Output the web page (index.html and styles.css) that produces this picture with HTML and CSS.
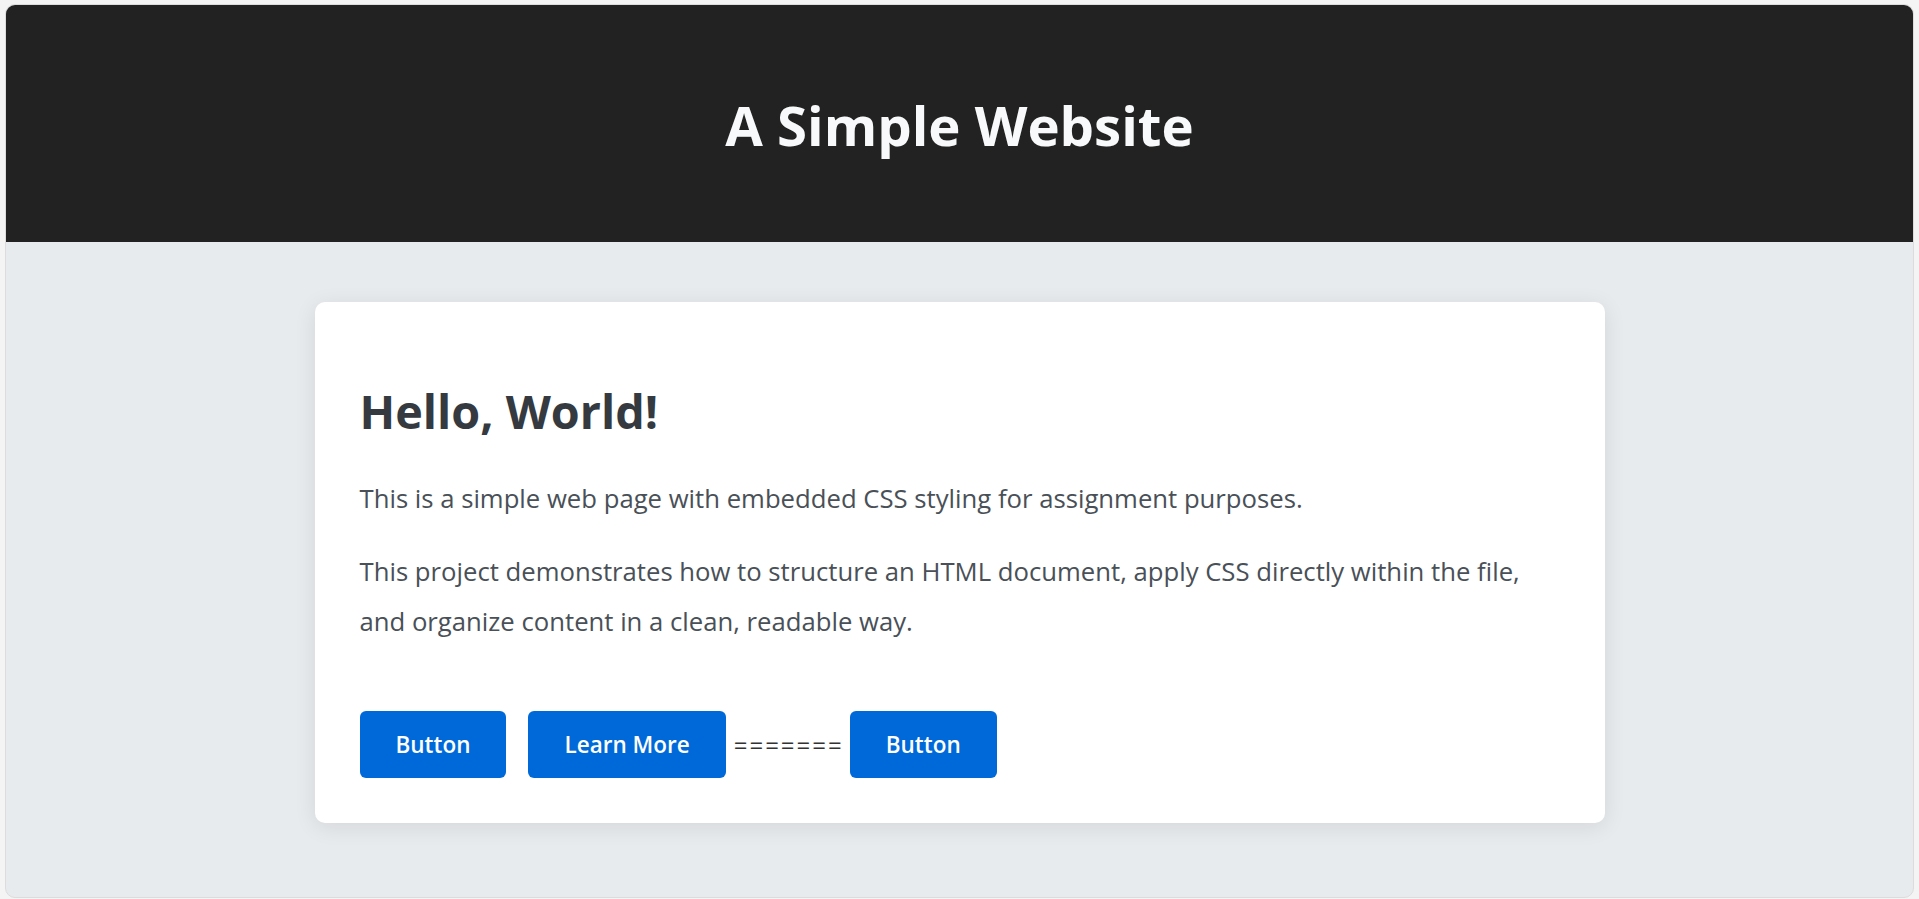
FILE: index.html
```html
<!DOCTYPE html>
<html lang="en">
<head>
<meta charset="utf-8">
<title>A Simple Website</title>
<link rel="stylesheet" href="styles.css">
</head>
<body>
<div class="frame">
  <header class="site-header">
    <h1 class="site-title">A Simple Website</h1>
  </header>
  <main class="site-main">
    <section class="card">
      <h2 class="card-title">Hello, World!</h2>
      <p class="card-text">This is a simple web page with embedded CSS styling for assignment purposes.</p>
      <p class="card-text">This project demonstrates how to structure an HTML document, apply CSS directly within the file, and organize content in a clean, readable way.</p>
      <div class="actions">
        <a class="btn btn-first" href="#">Button</a>
        <a class="btn" href="#">Learn More</a>
        <span class="sep">=======</span>
        <button class="btn" type="button">Button</button>
      </div>
    </section>
  </main>
</div>
</body>
</html>
```
FILE: styles.css
```css
* { box-sizing: border-box; }
html, body { margin: 0; height: 100%; }
body {
  background: #f4f4f4;
  padding: 4px 5px 1px 5px;
  font-family: "Open Sans", "Noto Sans", sans-serif;
}
.frame {
  height: 100%;
  display: flex;
  flex-direction: column;
  border: 1px solid #dcdcdc;
  border-radius: 10px;
  overflow: hidden;
  background: #e8ebee;
}
.site-header {
  background: #222222;
  height: 237px;
  display: flex;
  align-items: center;
  justify-content: center;
  flex: none;
}
.site-title {
  margin: 0;
  color: #f8f9fa;
  font-size: 54.5px;
  font-weight: 700;
  line-height: 1;
  padding-top: 4px;
}
.site-main {
  flex: 1;
  display: flex;
  justify-content: center;
  align-items: flex-start;
  padding-top: 60px;
}
.card {
  width: 1290px;
  background: #ffffff;
  border-radius: 10px;
  box-shadow: 0 4px 22px rgba(0, 0, 0, 0.09);
  padding: 81px 45px 45px 45px;
}
.card-title {
  margin: 0 0 35px 0;
  color: #343a40;
  font-size: 46.7px;
  font-weight: 700;
  line-height: 1.2;
}
.card-text {
  margin: 0 0 23px 0;
  color: #495057;
  font-size: 25.7px;
  line-height: 50px;
}
.actions {
  display: flex;
  align-items: center;
  margin-top: 64px;
}
.btn {
  display: inline-flex;
  align-items: center;
  justify-content: center;
  height: 67px;
  padding: 0 36px;
  background: #0069d9;
  color: #ffffff;
  border: none;
  border-radius: 6px;
  font-family: inherit;
  font-size: 22.5px;
  font-weight: 600;
  text-decoration: none;
}
.btn-first { margin-right: 22px; }
.sep {
  margin: 0 6px 0 8px;
  font-size: 24px;
  letter-spacing: 2px;
  color: #333333;
}
```
